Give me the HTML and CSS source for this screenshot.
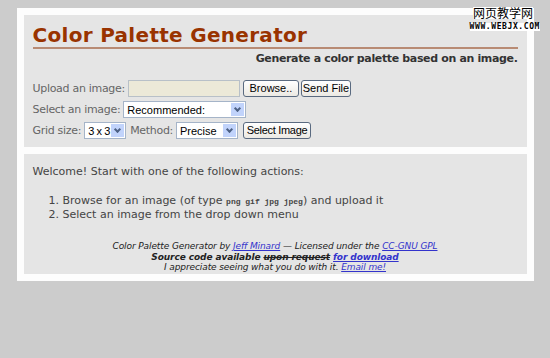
FILE: index.html
```html
<!DOCTYPE html>
<html>
<head>
<meta charset="utf-8">
<link rel="stylesheet" href="styles.css">
</head>
<body>
<div class="wrap">
  <div class="panel head">
    <h1 class="title">Color Palette Generator</h1>
    <p class="subtitle">Generate a color palette based on an image.</p>
    <div class="form">
      <div class="row">
        <span class="label">Upload an image:</span>
        <span class="file"></span>
        <button class="btn browse">Browse..</button>
        <button class="btn send">Send File</button>
      </div>
      <div class="row">
        <span class="label">Select an image:</span>
        <span class="select sel-img"><span class="val">Recommended:</span><span class="arrow"></span></span>
      </div>
      <div class="row">
        <span class="label">Grid size:</span>
        <span class="select sel-grid"><span class="val">3 x 3</span><span class="arrow"></span></span>
        <span class="label method">Method:</span>
        <span class="select sel-method"><span class="val">Precise</span><span class="arrow"></span></span>
        <button class="btn selimg">Select Image</button>
      </div>
    </div>
  </div>
  <div class="panel body">
    <p class="welcome">Welcome! Start with one of the following actions:</p>
    <ol class="actions">
      <li>Browse for an image (of type <code>png gif jpg jpeg</code>) and upload it</li>
      <li>Select an image from the drop down menu</li>
    </ol>
    <div class="credits">
      <p>Color Palette Generator by <a href="#">Jeff Minard</a> — Licensed under the <a href="#">CC-GNU GPL</a></p>
      <p class="strong">Source code available <s>upon request</s> <a href="#">for download</a></p>
      <p>I appreciate seeing what you do with it. <a href="#">Email me!</a></p>
    </div>
  </div>
</div>
<div class="mark">
  <span class="cn">网页教学网</span>
  <span class="url">WWW.WEBJX.COM</span>
</div>
</body>
</html>
```

FILE: styles.css
```css
html, body {
  margin: 0;
  padding: 0;
}
body {
  background: #cccccc;
  padding-top: 8px;
  font-family: "DejaVu Sans", Verdana, sans-serif;
  color: #444;
}
.wrap {
  width: 503px;
  margin: 0 auto;
  padding: 7px;
  background: #fdfdfd;
  display: flex;
  flex-direction: column;
  gap: 7px;
}
.panel {
  background: #e5e5e5;
}
.head {
  height: 132px;
  box-sizing: border-box;
  padding: 8px 9px 0 9px;
}
.title {
  margin: 0;
  font-size: 20px;
  font-weight: bold;
  color: #993300;
  line-height: 24px;
  border-bottom: 2px solid #b88b74;
  letter-spacing: 0.3px;
}
.subtitle {
  margin: 3px 0 0 0;
  text-align: right;
  font-size: 11px;
  font-weight: bold;
  color: #333;
  line-height: 14px;
  letter-spacing: -0.35px;
}
.form {
  margin-top: 14px;
  display: flex;
  flex-direction: column;
  gap: 4px;
  font-size: 11px;
  color: #666;
}
.row {
  display: flex;
  align-items: center;
  gap: 3px;
  height: 17px;
  white-space: nowrap;
}
.label {
  letter-spacing: -0.3px;
}
.method {
  margin-left: 1px;
}
.file {
  width: 110px;
  height: 15px;
  border: 1px solid #b8c0c8;
  background: #ece9d8;
}
.btn {
  font-family: "Liberation Sans", Arial, sans-serif;
  font-size: 11px;
  color: #000;
  background: linear-gradient(#fff, #ece9e3);
  border: 1px solid #5a6a80;
  border-radius: 3px;
  height: 17px;
  padding: 0;
  line-height: 15px;
  white-space: nowrap;
}
.browse { width: 56px; }
.send { width: 50px; margin-left: -1px; }
.selimg { width: 68px; margin-left: 2px; letter-spacing: -0.3px; }
.select {
  display: flex;
  align-items: center;
  justify-content: space-between;
  height: 15px;
  border: 1px solid #a5b4c8;
  background: #fff;
  font-family: "Liberation Sans", Arial, sans-serif;
  color: #000;
  font-size: 11px;
  padding-left: 3px;
  white-space: nowrap;
}
.sel-img { width: 118px; }
.sel-grid { width: 37px; letter-spacing: -0.4px; }
.sel-method { width: 57px; }
.arrow {
  flex: none;
  width: 13px;
  height: 13px;
  margin-right: 1px;
  background: #c1d3fb;
  position: relative;
}
.arrow::after {
  content: "";
  position: absolute;
  left: 4px;
  top: 3px;
  width: 3px;
  height: 3px;
  border-right: 2px solid #4d6185;
  border-bottom: 2px solid #4d6185;
  transform: rotate(45deg);
}
.body {
  height: 120px;
  box-sizing: border-box;
  padding: 11px 9px 0 9px;
  font-size: 11px;
  color: #444;
}
.welcome {
  margin: 0;
  line-height: 14px;
}
.actions {
  margin: 15px 0 0 0;
  padding-left: 30px;
  line-height: 13px;
}
.actions code {
  font-family: "Liberation Mono", "Courier New", monospace;
  font-size: 8px;
  font-weight: bold;
}
.credits {
  margin-top: 20px;
  text-align: center;
  font-style: italic;
  font-size: 9px;
  color: #222;
  line-height: 10.5px;
  letter-spacing: -0.1px;
}
.credits p {
  margin: 0;
}
.credits .strong {
  font-weight: bold;
}
.credits a {
  color: #3333cc;
}
.mark {
  position: absolute;
  top: 7px;
  right: 10px;
  display: flex;
  flex-direction: column;
  align-items: flex-end;
  line-height: 1;
}
.cn {
  font-family: "Noto Sans CJK SC", sans-serif;
  font-size: 12px;
  color: #000;
  margin-right: 7px;
  background: #fff;
}
.url {
  font-family: "DejaVu Sans Mono", monospace;
  font-weight: bold;
  font-size: 8px;
  color: #000;
  letter-spacing: 0.6px;
  margin-top: 4px;
  background: #fff;
}
```
